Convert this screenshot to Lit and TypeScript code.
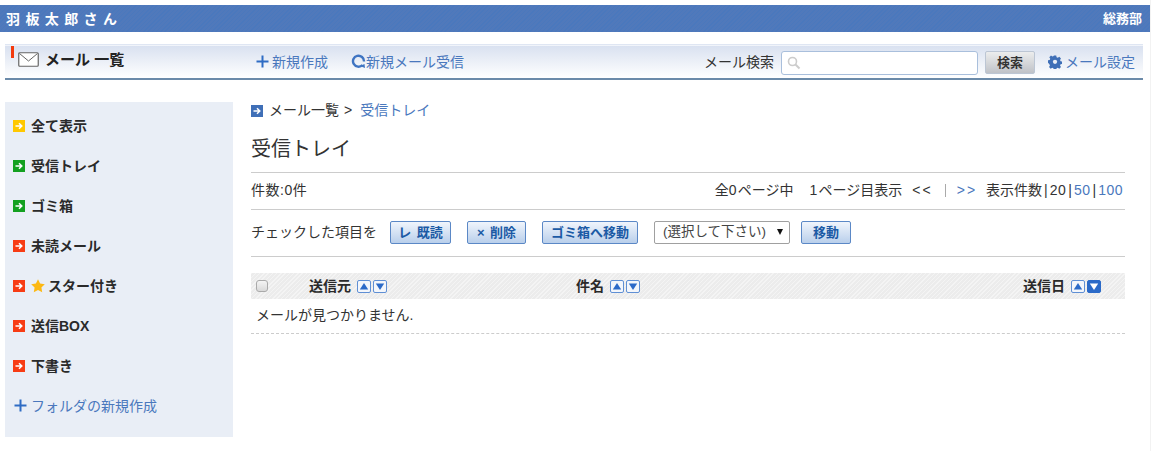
import { LitElement, html, css, svg } from "lit";
import { customElement } from "lit/decorators.js";

const plus = html`<svg class="plus" width="13" height="13" viewBox="0 0 13 13"><path d="M6.5 0.5v12M0.5 6.5h12" stroke="#2f6cc4" stroke-width="2" fill="none"/></svg>`;
const arrow = (c: string) => html`<svg class="arrow" width="12" height="12" viewBox="0 0 12 12"><rect width="12" height="12" fill="${c}"/><path d="M2.5 6h6M6 3.2L8.8 6L6 8.8" stroke="#fff" stroke-width="1.5" fill="none"/></svg>`;
const sort = (dir: "up" | "down", on = false) => html`<svg class="sort" width="14" height="13" viewBox="0 0 14 13"><rect x=".5" y=".5" width="13" height="12" rx="1.5" fill="${on ? "#2b6ac8" : "#f3f6fb"}" stroke="${on ? "#2b6ac8" : "#5f8fd4"}"/>${svg`<path d="${dir === "up" ? "M7 3L11.2 9.5H2.8Z" : "M7 10L2.8 3.5H11.2Z"}" fill="${on ? "#fff" : "#2b6ac8"}"/>`}</svg>`;

@customElement("app-root")
export class AppRoot extends LitElement {
  static styles = css`
    :host { display: block; width: 1151px; height: 451px; overflow: hidden; background: #fff; color: #333; box-sizing: border-box; border-right: 1px solid #f2f2f2;
      font-family: "Liberation Sans", "Noto Sans CJK JP", sans-serif; font-size: 14px; line-height: 20px; padding-top: 5px; }
    a { color: #4a78bd; text-decoration: none; }
    .top { height: 27px; display: flex; align-items: center; justify-content: space-between; padding: 0 8px 0 6px; color: #fff; font-weight: 700; font-size: 13px; width: 1150px; box-sizing: border-box;
      background: repeating-linear-gradient(135deg, #4a78bd 0 1px, #5079bb 1px 3px); }
    .name { letter-spacing: 5.4px; font-size: 14px; }
    .bar { margin: 12px 0 0 5px; width: 1138px; height: 36px; box-sizing: border-box; position: relative; display: flex; align-items: center; padding: 0 8px 0 13px;
      border-top: 1px solid #dfe6f3; border-bottom: 2px solid #6b8aa9; background: linear-gradient(#f1f4fa 0 1px, #d9e1f0 1px, #fff 100%); }
    .flag { position: absolute; left: 6px; top: 1px; width: 3px; height: 12px; background: #f33a0d; }
    .bar-title { display: flex; align-items: center; gap: 6px; width: 238px; font-weight: 700; font-size: 15px; color: #222; position: relative; top: -2px; }
    .bar-links { display: flex; gap: 23px; flex: 1; }
    .bar-links a, .setting { display: flex; align-items: center; font-size: 14px; }
    .bar-links a:first-child svg { margin-right: 3px; }
    .search-label { margin-right: 7px; }
    .search { width: 197px; height: 24px; margin-top: 2px; box-sizing: border-box; border: 1px solid #a9bfdc; border-radius: 3px; background: #fff; display: flex; align-items: center; padding-left: 5px; }
    .search-btn { margin-left: 7px; margin-top: 1px; width: 50px; height: 23px; box-sizing: border-box; border: 1px solid #bcc6d4; border-radius: 2px; background: linear-gradient(#eceded, #bfc2c8); font: 700 13px/21px "Liberation Sans", "Noto Sans CJK JP", sans-serif; color: #333; text-align: center; }
    .setting { margin-left: 13px; gap: 3px; }
    .body { display: flex; margin-top: 22px; padding-left: 5px; }
    .side { width: 228px; height: 335px; background: #e9eef6; box-sizing: border-box; padding: 3.5px 0 0 8px; flex: none; }
    .side-item { height: 40px; display: flex; align-items: center; gap: 6px; font-weight: 700; color: #2a2a2a; font-size: 14px; }
    .side-new { height: 40px; display: flex; align-items: center; gap: 4px; padding-left: 1px; font-size: 14px; }
    .star { margin: 0 -3px 0 0; }
    .main { width: 874px; margin-left: 18px; flex: none; }
    .crumb { display: flex; align-items: center; gap: 6px; height: 18px; }
    .crumb-text { display: flex; padding-bottom: 2px; }
    .sep { margin: 0 8px 0 5px; }
    h1 { margin: 17px 0 0; font-weight: 400; font-size: 20px; line-height: 24px; color: #333; height: 35px; border-bottom: 1px solid #ccc; }
    .info { height: 36px; box-sizing: border-box; padding-bottom: 2px; display: flex; align-items: center; justify-content: space-between; box-shadow: 0 1px 0 #ccc; margin-bottom: 1px; }
    .count { letter-spacing: .5px; }
    .pager { display: flex; align-items: center; white-space: nowrap; margin-right: 2px; }
    .n { letter-spacing: .5px; }
    .d { letter-spacing: 1.3px; }
    .gap { margin-left: 16px; }
    .chev { letter-spacing: 2px; margin-left: 10px; }
    .vbar { width: 1px; height: 13px; background: #aaa; margin: 1px 11px 0 12px; }
    .next { margin-left: 0; }
    .pipe { margin: 0 2px; }
    .total { margin-left: 9px; }
    .actions { height: 46px; box-sizing: border-box; padding-bottom: 2px; display: flex; align-items: center; box-shadow: 0 1px 0 #ccc; margin-bottom: 1px; }
    .btn { height: 23px; box-sizing: border-box; border: 1px solid #5b88c6; border-radius: 2px; background: linear-gradient(#f0f5fc, #b9cfeb); color: #1b5aa5; font: 700 13px/21px "Liberation Sans", "Noto Sans CJK JP", sans-serif; text-align: center; white-space: nowrap; flex: none; word-spacing: 2px; }
    .b1 { width: 61px; margin-left: 13px; }
    .b2 { width: 59px; margin-left: 16px; }
    .b3 { width: 96px; margin-left: 16px; }
    .b4 { width: 50px; margin-left: 11px; }
    .select { width: 136px; height: 23px; box-sizing: border-box; border: 1px solid #a0a0a0; border-radius: 2px; margin-left: 16px; padding: 0 0 0 8px; display: flex; align-items: center; justify-content: space-between; color: #444; font-size: 13.5px; }
    .caret { width: 0; height: 0; border: 3.5px solid transparent; border-top: 6px solid #111; border-bottom: 0; margin-right: 6px; }
    .thead { margin-top: 17px; height: 26px; display: flex; align-items: center; font-weight: 700; font-size: 14px; color: #2a2a2a;
      background: repeating-linear-gradient(135deg, #f4f4f4 0 1px, #ececec 1px 3px); }
    .cb { width: 12px; height: 12px; box-sizing: border-box; border: 1px solid #aaa; border-radius: 3px; background: linear-gradient(#f4f4f4, #d9d9d9); margin-left: 5px; flex: none; }
    .col { display: flex; align-items: center; gap: 2px; }
    .col span { margin-right: 4px; }
    .c1 { margin-left: 41px; width: 267px; }
    .c2 { width: 447px; }
    .empty { height: 35px; display: flex; align-items: center; padding: 0 0 3px 5px; border-bottom: 1px dashed #ccc; box-sizing: border-box; }
  `;

  render() {
    const items: [string, string][] = [["#ffc800", "全て表示"], ["#13a020", "受信トレイ"], ["#13a020", "ゴミ箱"], ["#f73c14", "未読メール"]];
    return html`
      <div class="top"><span class="name">羽板太郎さん</span><span>総務部</span></div>
      <div class="bar">
        <i class="flag"></i>
        <div class="bar-title">
          <svg width="21" height="15" viewBox="0 0 21 15"><rect x=".75" y=".75" width="19.5" height="13.5" rx="1" fill="#fff" stroke="#666" stroke-width="1.2"/><path d="M1.5 1.5L10.5 9L19.5 1.5" stroke="#666" fill="none"/></svg>
          <span>メール 一覧</span>
        </div>
        <div class="bar-links">
          <a>${plus}新規作成</a>
          <a><svg width="15" height="15" viewBox="0 0 15 15"><path d="M11.5 11A5.5 5.5 0 1 1 13 7.5" stroke="#3f74c2" stroke-width="2.4" fill="none"/><path d="M9 12l4.5-2 .5 4z" fill="#3f74c2"/></svg>新規メール受信</a>
        </div>
        <span class="search-label">メール検索</span>
        <div class="search"><svg width="14" height="14" viewBox="0 0 14 14"><circle cx="5.5" cy="5.5" r="4" stroke="#ccc" stroke-width="1.6" fill="none"/><path d="M8.5 8.5L12.5 12.5" stroke="#ccc" stroke-width="2"/></svg></div>
        <div class="search-btn">検索</div>
        <a class="setting"><svg width="14" height="14" viewBox="0 0 15 15"><path d="M6.2 1h2.6l.4 1.8 1.3.6 1.6-1 1.8 1.8-1 1.6.6 1.3 1.8.4v2.6l-1.8.4-.6 1.3 1 1.6-1.8 1.8-1.6-1-1.3.6-.4 1.8H6.2l-.4-1.8-1.3-.6-1.6 1-1.8-1.8 1-1.6-.6-1.3L0 8.8V6.2l1.8-.4.6-1.3-1-1.6 1.8-1.8 1.6 1 1.3-.6z" fill="#3f6fb7" transform="translate(0 -.5)"/><circle cx="7.5" cy="7.3" r="2.3" fill="#e9eef6"/></svg>メール設定</a>
      </div>
      <div class="body">
        <div class="side">
          ${items.map(([c, t]) => html`<div class="side-item">${arrow(c)}<span>${t}</span></div>`)}
          <div class="side-item">${arrow("#f73c14")}<svg class="star" width="14" height="14" viewBox="0 0 14 14"><path d="M7 .2l2.1 4.3 4.7.7-3.4 3.3.8 4.7L7 11l-4.2 2.2.8-4.7L.2 5.2l4.7-.7z" fill="#fcb813"/></svg><span>スター付き</span></div>
          <div class="side-item">${arrow("#f73c14")}<span>送信BOX</span></div>
          <div class="side-item">${arrow("#f73c14")}<span>下書き</span></div>
          <a class="side-new">${plus}フォルダの新規作成</a>
        </div>
        <div class="main">
          <div class="crumb">${arrow("#3f6fb7")}<span class="crumb-text">メール一覧<span class="sep">&gt;</span><a>受信トレイ</a></span></div>
          <h1>受信トレイ</h1>
          <div class="info"><span class="count">件数:0件</span>
            <div class="pager">
              <span>全<span class="d">0</span>ページ中</span><span class="gap"><span class="d">1</span>ページ目表示</span>
              <span class="chev">&lt;&lt;</span><i class="vbar"></i><a class="chev next">&gt;&gt;</a>
              <span class="total">表示件数</span><span class="pipe">|</span><span class="n">20</span><span class="pipe">|</span><a class="n">50</a><span class="pipe">|</span><a class="n">100</a>
            </div></div>
          <div class="actions">
            <span>チェックした項目を</span>
            <div class="btn b1">レ 既読</div>
            <div class="btn b2">× 削除</div>
            <div class="btn b3">ゴミ箱へ移動</div>
            <div class="select"><span>(選択して下さい)</span><i class="caret"></i></div>
            <div class="btn b4">移動</div>
          </div>
          <div class="thead">
            <i class="cb"></i>
            <div class="col c1"><span>送信元</span>${sort("up")}${sort("down")}</div>
            <div class="col c2"><span>件名</span>${sort("up")}${sort("down")}</div>
            <div class="col"><span>送信日</span>${sort("up")}${sort("down", true)}</div>
          </div>
          <div class="empty">メールが見つかりません.</div>
        </div>
      </div>
    `;
  }
}
